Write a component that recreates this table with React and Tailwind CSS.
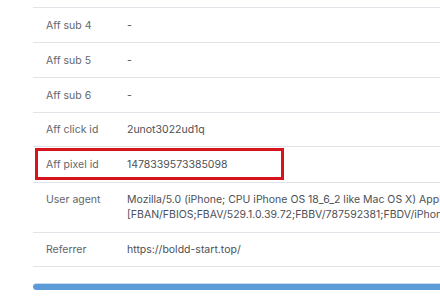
const rows = [
  { label: 'Aff sub 4', value: '-', h: 'h-[35px]' },
  { label: 'Aff sub 5', value: '-', h: 'h-[35px]' },
  { label: 'Aff sub 6', value: '-', h: 'h-[35px]' },
  { label: 'Aff click id', value: '2unot3022ud1q', h: 'h-[34px]' },
]

function Row({ label, children, className = '' }) {
  return (
    <div className={`flex border-t border-[#e2e3e8] ${className}`}>
      <div className="w-[81px] shrink-0 pl-[13px] text-[#63666c]">{label}</div>
      <div className="flex-1 pl-[13px] whitespace-nowrap text-[#4d5056]">{children}</div>
    </div>
  )
}

export default function App() {
  return (
    <div
      className="w-[440px] h-[299px] overflow-hidden bg-white text-[10.5px] leading-[15px]"
      style={{ fontFamily: 'Inter, "Noto Sans", sans-serif' }}
    >
      <div className="pl-[33px] pt-[7px]">
        {rows.map((r) => (
          <Row key={r.label} label={r.label} className={`${r.h} items-center`}>
            {r.value}
          </Row>
        ))}

        <div className="relative">
          <Row label="Aff pixel id" className="h-[36px] items-center">
            1478339573385098
          </Row>
          <div className="absolute left-[2px] top-[2px] w-[249px] h-[32px] border-[3px] border-[#d7141b]" />
        </div>

        <Row label="User agent" className="h-[50px] pt-[9px]">
          <div>Mozilla/5.0 (iPhone; CPU iPhone OS 18_6_2 like Mac OS X) AppleWebKit/605.1.15 (KHTML, like Gecko) Mobile/22G100</div>
          <div>[FBAN/FBIOS;FBAV/529.1.0.39.72;FBBV/787592381;FBDV/iPhone14,5;FBMD/iPhone;FBSN/iOS]</div>
        </Row>

        <Row label="Referrer" className="h-[35px] items-center border-b">
          https://boldd-start.top/
        </Row>

        <div className="mt-[16px] h-[7px] rounded-l-[4px] border-t border-[#c9dcef] bg-[#5b9bd7]" />
      </div>
    </div>
  )
}
